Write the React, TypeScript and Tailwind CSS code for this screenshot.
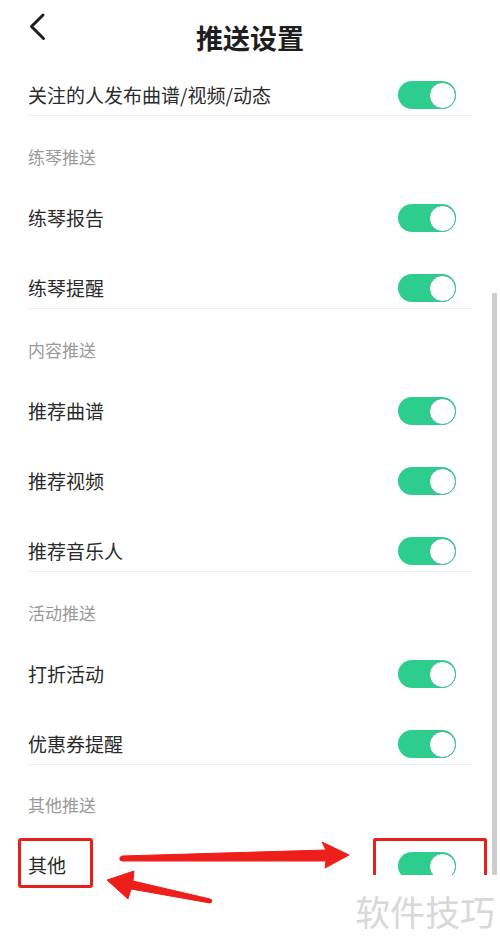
import React from "react";

type Row = { label: string; last?: boolean; cut?: boolean };
type Group = { title?: string; rows: Row[] };

const groups: Group[] = [
  { rows: [{ label: "关注的人发布曲谱/视频/动态", last: true }] },
  { title: "练琴推送", rows: [{ label: "练琴报告" }, { label: "练琴提醒", last: true }] },
  {
    title: "内容推送",
    rows: [{ label: "推荐曲谱" }, { label: "推荐视频" }, { label: "推荐音乐人", last: true }],
  },
  { title: "活动推送", rows: [{ label: "打折活动" }, { label: "优惠券提醒", last: true }] },
  { title: "其他推送", rows: [{ label: "其他", cut: true }] },
];

function Toggle() {
  return (
    <div className="flex h-[28px] w-[58px] items-center justify-end rounded-full bg-[#2dcd8e]">
      <div className="h-[27px] w-[27px] rounded-full border-[1.5px] border-[#38b68d] bg-white" />
    </div>
  );
}

export default function App() {
  return (
    <div
      className="relative h-[949px] w-[500px] overflow-hidden bg-white"
      style={{ fontFamily: '"Noto Sans CJK SC", "Noto Sans", sans-serif' }}
    >
      {/* header */}
      <header className="grid h-[75px] grid-cols-[1fr_auto_1fr]">
        <div className="pl-[28px] pt-[12px]">
          <svg width="20" height="30" viewBox="0 0 20 30" fill="none">
            <path
              d="M15 3 L3.5 14.5 L15.5 26.5"
              stroke="#1f1f1f"
              strokeWidth="3"
              strokeLinecap="round"
              strokeLinejoin="round"
            />
          </svg>
        </div>
        <h1 className="self-center text-[27px] font-bold leading-none text-[#1e1e1e]">推送设置</h1>
        <div />
      </header>

      {groups.map((g, gi) => (
        <section key={gi}>
          {g.title && (
            <div
              className={
                gi === groups.length - 1
                  ? "flex h-[65px] items-end pb-[15px] pl-[28px] text-[17px] leading-[20px] text-[#9a9a9a]"
                  : "flex h-[67px] items-end pb-[16px] pl-[28px] text-[17px] leading-[20px] text-[#9a9a9a]"
              }
            >
              {g.title}
            </div>
          )}
          {g.rows.map((r, ri) => {
            const first = gi === 0;
            return (
              <div key={ri}>
                <div
                  className={
                    first
                      ? "flex h-[40px] items-center justify-between pl-[28px] pr-[44px]"
                      : r.last
                        ? "flex h-[55px] items-start justify-between pl-[28px] pr-[44px] pt-[15px]"
                        : "flex h-[70px] items-start justify-between pl-[28px] pr-[44px] pt-[15px]"
                  }
                >
                  <div className="flex h-[40px] items-center">
                    <span className="text-[19px] leading-[20px] text-[#2a2a2a]">{r.label}</span>
                  </div>
                  {r.cut ? (
                    <div className="h-[30px] overflow-hidden pt-[7px]">
                      <Toggle />
                    </div>
                  ) : (
                    <div className="flex h-[40px] items-center">
                      <Toggle />
                    </div>
                  )}
                </div>
                {r.last && <div className="mx-[28px] h-px bg-[#eeeeee]" />}
              </div>
            );
          })}
        </section>
      ))}

      {/* scrollbar */}
      <div className="absolute right-[3px] top-[293px] h-[582px] w-[5px] bg-[#cdcdcd]" />

      {/* annotation boxes */}
      <div className="absolute left-[373px] top-[838px] h-[37px] w-[114px] rounded-t-[3px] border-[3px] border-b-0 border-[#e8201c]" />
      <div className="absolute left-[18px] top-[838px] h-[50px] w-[75px] rounded-[3px] border-[3px] border-[#e8201c]" />

      {/* arrows */}
      <svg className="pointer-events-none absolute left-0 top-0" width="500" height="949" viewBox="0 0 500 949">
        <polygon
          points="122,856 326,850 322,842 349,855 325,868 326,861 122,861"
          fill="#ee1e1a"
          stroke="#ee1e1a"
          strokeWidth="1"
          strokeLinejoin="round"
        />
        <circle cx="122" cy="858.5" r="2.6" fill="#ee1e1a" />
        <polygon
          points="210,899 133,881 134,871 107,880 128,899 131,889 210,903"
          fill="#ee1e1a"
          stroke="#ee1e1a"
          strokeWidth="1"
          strokeLinejoin="round"
        />
        <circle cx="210" cy="901" r="2.2" fill="#ee1e1a" />
      </svg>

      {/* watermark */}
      <div className="absolute left-[355px] top-[890px] text-[35px] leading-[42px] text-[#d8d8d8]">软件技巧</div>
    </div>
  );
}
